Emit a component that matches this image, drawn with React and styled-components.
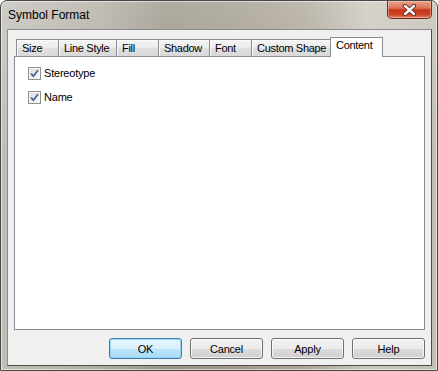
import React from 'react';
import styled, { createGlobalStyle, css } from 'styled-components';

const GlobalStyle = createGlobalStyle`
  body {
    margin: 0;
    font-family: "Liberation Sans", Arial, sans-serif;
  }
`;

// window frame (aero glass, blurred)
const Window = styled.div`
  width: 438px;
  height: 371px;
  box-sizing: border-box;
  display: flex;
  flex-direction: column;
  padding: 0 5px 4px 6px;
  border: 1px solid #474747;
  border-radius: 7px 7px 0 0;
  box-shadow: inset 0 0 0 1px rgba(255, 255, 255, 0.55);
  background:
    linear-gradient(rgba(255, 255, 255, 0.22), rgba(255, 255, 255, 0) 40%),
    linear-gradient(to right, #c1bfb7 0%, #b1ada3 22%, #9a9487 38%, #a19a8d 55%, #ada698 70%, #cbc7bd 84%, #c2beb4 100%);
`;

const TitleBar = styled.div`
  height: 28px;
  display: flex;
  align-items: flex-start;
  justify-content: space-between;
`;

const Title = styled.div`
  margin: 7px 0 0 1px;
  font-size: 12px;
  line-height: 15px;
  color: #000;
`;

const CloseButton = styled.div`
  width: 45px;
  height: 18px;
  box-sizing: border-box;
  display: flex;
  align-items: center;
  justify-content: center;
  border: 1px solid #6e2c1f;
  border-top: none;
  border-radius: 0 0 5px 5px;
  background: linear-gradient(#eaa38e 0%, #db7358 42%, #c7361a 52%, #cc4424 80%, #e4846a 100%);
  box-shadow: inset 0 0 0 1px rgba(255, 220, 200, 0.45);
`;

const Client = styled.div`
  flex: 1;
  display: flex;
  flex-direction: column;
  padding: 7px 6px 6px 6px;
  background: #f0f0f0;
  border: 1px solid #4d4d4d;
  border-top-color: #8c8c8c;
  border-left-color: #8c8c8c;
`;

const TabStrip = styled.div`
  display: flex;
  align-items: flex-end;
  height: 19px;
  margin-left: 2px;
`;

const Tab = styled.div`
  width: ${p => p.$w}px;
  box-sizing: border-box;
  height: 17px;
  padding: 1px 0 0 5px;
  font-size: 11px;
  letter-spacing: -0.3px;
  line-height: 15px;
  color: #000;
  white-space: nowrap;
  overflow: hidden;
  border-top: 1px solid #898c95;
  border-left: 1px solid #898c95;
  background: linear-gradient(#f4f4f4 0%, #ebebeb 50%, #e0e0e0 51%, #d9d9d9 100%);
  box-shadow: inset 1px 1px 0 #fbfbfb;

  ${p => p.$active && css`
    position: relative;
    z-index: 1;
    height: 20px;
    margin-bottom: -1px;
    padding-top: 0;
    border-right: 1px solid #898c95;
    background: #fff;
    box-shadow: none;
  `}
`;

const Panel = styled.div`
  flex: 1;
  display: flex;
  flex-direction: column;
  gap: 11px;
  padding: 10px 13px;
  background: #fff;
  border: 1px solid #898c95;
`;

const CheckRow = styled.label`
  display: flex;
  align-items: center;
  gap: 3px;
  font-size: 11px;
  letter-spacing: -0.2px;
  line-height: 13px;
  color: #000;
`;

const CheckBox = styled.span`
  width: 13px;
  height: 13px;
  box-sizing: border-box;
  display: flex;
  align-items: center;
  justify-content: center;
  border: 1px solid #8e8f8f;
  background: linear-gradient(135deg, #dcdcdc, #f9f9f9);
  box-shadow: inset 0 0 0 1px #f4f4f4;
`;

const ButtonRow = styled.div`
  display: flex;
  justify-content: flex-end;
  gap: 8px;
  margin-top: 8px;
`;

const Button = styled.div`
  width: 73px;
  height: 21px;
  box-sizing: border-box;
  display: flex;
  align-items: center;
  justify-content: center;
  font-size: 11px;
  letter-spacing: -0.2px;
  color: #000;
  border: 1px solid #707070;
  border-radius: 3px;
  background: linear-gradient(#f2f2f2 0%, #ebebeb 50%, #dddddd 51%, #cfcfcf 100%);
  box-shadow: inset 0 0 0 1px rgba(255, 255, 255, 0.75);

  ${p => p.$default && css`
    border-color: #3c7fb1;
    background: linear-gradient(#eaf6fd 0%, #d9f0fc 50%, #bee6fd 51%, #a7d9f5 100%);
    box-shadow: inset 0 0 0 1px #98d6f4;
  `}
`;

const tabs = [
  { label: 'Size', w: 42 },
  { label: 'Line Style', w: 58 },
  { label: 'Fill', w: 42 },
  { label: 'Shadow', w: 51 },
  { label: 'Font', w: 42 },
  { label: 'Custom Shape', w: 79 },
  { label: 'Content', w: 53, active: true },
];

function CloseGlyph() {
  return (
    <svg width="15" height="12" viewBox="0 0 15 12">
      <path d="M3 2 L12 10 M12 2 L3 10" stroke="#5b2216" strokeWidth="4.2" strokeLinecap="round" fill="none" />
      <path d="M3 2 L12 10 M12 2 L3 10" stroke="#fff" strokeWidth="2.4" strokeLinecap="round" fill="none" />
    </svg>
  );
}

function Check() {
  return (
    <svg width="9" height="9" viewBox="0 0 9 9">
      <path d="M1 4.5 L3.4 7.2 L8 1.2" stroke="#4a5f97" strokeWidth="1.8" fill="none" />
    </svg>
  );
}

export default function App() {
  return (
    <>
      <GlobalStyle />
      <Window>
        <TitleBar>
          <Title>Symbol Format</Title>
          <CloseButton>
            <CloseGlyph />
          </CloseButton>
        </TitleBar>
        <Client>
          <TabStrip>
            {tabs.map(t => (
              <Tab key={t.label} $w={t.w} $active={t.active}>{t.label}</Tab>
            ))}
          </TabStrip>
          <Panel>
            <CheckRow>
              <CheckBox><Check /></CheckBox>
              Stereotype
            </CheckRow>
            <CheckRow>
              <CheckBox><Check /></CheckBox>
              Name
            </CheckRow>
          </Panel>
          <ButtonRow>
            <Button $default>OK</Button>
            <Button>Cancel</Button>
            <Button>Apply</Button>
            <Button>Help</Button>
          </ButtonRow>
        </Client>
      </Window>
    </>
  );
}
